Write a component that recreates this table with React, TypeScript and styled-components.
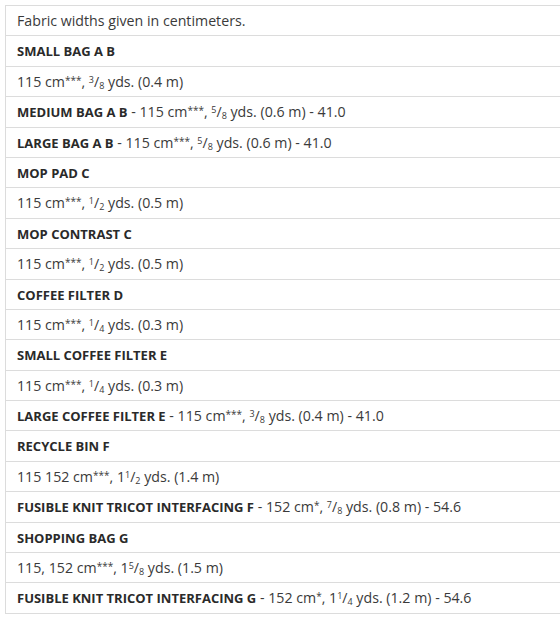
import React from "react";
import styled, { createGlobalStyle } from "styled-components";

const Global = createGlobalStyle`
  html, body { margin: 0; padding: 0; background: #fff; overflow: hidden; }
  body { font-family: "Open Sans", "Liberation Sans", sans-serif; }
`;

const Page = styled.div`
  padding: 5px 0 0 5px;
`;

const Table = styled.div`
  width: 600px;
  border-left: 1px solid #dcdcdc;
  border-top: 1px solid #dcdcdc;
  display: flex;
  flex-direction: column;
`;

const Row = styled.div`
  border-bottom: 1px solid #dcdcdc;
  padding: 4px 11px 4px 11px;
  height: 21.4px;
  line-height: 21.4px;
  font-size: 14.2px;
  color: #3a3a3a;
  white-space: nowrap;
`;

const Title = styled.b`
  font-weight: 700;
  font-size: 13px;
  color: #2a2a2a;
`;

const Stars = styled.span`
  font-size: 10px;
  vertical-align: 3px;
  line-height: 0;
`;

const Sup = styled.sup`
  font-size: 9px;
  vertical-align: 4px;
  line-height: 0;
`;

const Sub = styled.sub`
  font-size: 9px;
  vertical-align: -2px;
  line-height: 0;
`;

const Frac: React.FC<{ w?: string; n: string; d: string }> = ({ w, n, d }) => (
  <>
    {w}
    <Sup>{n}</Sup>/<Sub>{d}</Sub>
  </>
);

const Cm: React.FC<{ stars: string }> = ({ stars }) => (
  <>
    cm<Stars>{stars}</Stars>
  </>
);

type Item = {
  title?: string;
  text?: React.ReactNode;
};

const items: Item[] = [
  { text: "Fabric widths given in centimeters." },
  { title: "SMALL BAG A B" },
  { text: <>115 <Cm stars="***" />, <Frac n="3" d="8" /> yds. (0.4 m)</> },
  { title: "MEDIUM BAG A B", text: <>115 <Cm stars="***" />, <Frac n="5" d="8" /> yds. (0.6 m) - 41.0</> },
  { title: "LARGE BAG A B", text: <>115 <Cm stars="***" />, <Frac n="5" d="8" /> yds. (0.6 m) - 41.0</> },
  { title: "MOP PAD C" },
  { text: <>115 <Cm stars="***" />, <Frac n="1" d="2" /> yds. (0.5 m)</> },
  { title: "MOP CONTRAST C" },
  { text: <>115 <Cm stars="***" />, <Frac n="1" d="2" /> yds. (0.5 m)</> },
  { title: "COFFEE FILTER D" },
  { text: <>115 <Cm stars="***" />, <Frac n="1" d="4" /> yds. (0.3 m)</> },
  { title: "SMALL COFFEE FILTER E" },
  { text: <>115 <Cm stars="***" />, <Frac n="1" d="4" /> yds. (0.3 m)</> },
  { title: "LARGE COFFEE FILTER E", text: <>115 <Cm stars="***" />, <Frac n="3" d="8" /> yds. (0.4 m) - 41.0</> },
  { title: "RECYCLE BIN F" },
  { text: <>115 152 <Cm stars="***" />, <Frac w="1" n="1" d="2" /> yds. (1.4 m)</> },
  { title: "FUSIBLE KNIT TRICOT INTERFACING F", text: <>152 <Cm stars="*" />, <Frac n="7" d="8" /> yds. (0.8 m) - 54.6</> },
  { title: "SHOPPING BAG G" },
  { text: <>115, 152 <Cm stars="***" />, <Frac w="1" n="5" d="8" /> yds. (1.5 m)</> },
  { title: "FUSIBLE KNIT TRICOT INTERFACING G", text: <>152 <Cm stars="*" />, <Frac w="1" n="1" d="4" /> yds. (1.2 m) - 54.6</> },
];

export default function App() {
  return (
    <>
      <Global />
      <Page>
        <Table>
          {items.map((it, i) => (
            <Row key={i}>
              {it.title && <Title>{it.title}</Title>}
              {it.title && it.text && " - "}
              {it.text}
            </Row>
          ))}
        </Table>
      </Page>
    </>
  );
}
